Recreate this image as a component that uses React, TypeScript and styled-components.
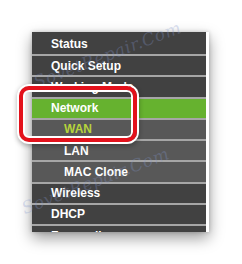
import React from "react";
import styled, { createGlobalStyle } from "styled-components";

const GlobalStyle = createGlobalStyle`
  html, body { margin: 0; padding: 0; background: #ffffff; }
  body { font-family: "Liberation Sans", Arial, sans-serif; }
`;

const Page = styled.div`
  position: relative;
  width: 242px;
  height: 264px;
  padding: 32px 0 0 32px;
  box-sizing: border-box;
  overflow: hidden;
`;

const Frame = styled.div`
  width: 177px;
  height: 200px;
  display: flex;
  background: #ffffff;
  overflow: hidden;
  box-shadow: 0 6px 14px rgba(0, 0, 0, 0.4), 0 0 4px rgba(0, 0, 0, 0.2);
`;

const Menu = styled.nav`
  width: 174px;
  display: flex;
  flex-direction: column;
  gap: 2px;
  background: #a6a6a6;
  flex-shrink: 0;
`;

type Kind = "main" | "sub" | "active" | "subActive";

const bg: Record<Kind, string> = {
  main: "#414141",
  sub: "#585858",
  active: "#66b22f",
  subActive: "#585858",
};

const fg: Record<Kind, string> = {
  main: "#ffffff",
  sub: "#ffffff",
  active: "#ffffff",
  subActive: "#b6d33c",
};

const Item = styled.div<{ $kind: Kind; $first?: boolean }>`
  flex-shrink: 0;
  height: ${(p) => (p.$first ? "22px" : "19.25px")};
  padding-top: ${(p) => (p.$first ? "1px" : "0")};
  box-sizing: border-box;
  display: flex;
  align-items: center;
  padding-left: ${(p) => (p.$kind === "sub" || p.$kind === "subActive" ? "32px" : "19px")};
  background: ${(p) => bg[p.$kind]};
  color: ${(p) => fg[p.$kind]};
  font-family: "Liberation Sans", Arial, sans-serif;
  font-weight: bold;
  font-size: 12px;
  white-space: nowrap;
`;

const Ring = styled.div`
  position: absolute;
  left: 19px;
  top: 86px;
  width: 118px;
  height: 56px;
  box-sizing: border-box;
  border: 4px solid #e3121c;
  border-radius: 10px;
  box-shadow: 0 0 0 2px #ffffff, 0 2px 5px 2px rgba(0, 0, 0, 0.3),
    inset 0 0 0 2px #ffffff;
  pointer-events: none;
`;

const Watermark = styled.div<{ $x: number; $y: number }>`
  position: absolute;
  left: ${(p) => p.$x}px;
  top: ${(p) => p.$y}px;
  transform: rotate(-21deg);
  transform-origin: left bottom;
  font-family: "DejaVu Serif", serif;
  font-style: italic;
  font-size: 17px;
  color: rgba(130, 150, 205, 0.3);
  white-space: nowrap;
  pointer-events: none;
  letter-spacing: 0.5px;
`;

const items: { label: string; kind: Kind }[] = [
  { label: "Status", kind: "main" },
  { label: "Quick Setup", kind: "main" },
  { label: "Working Mode", kind: "main" },
  { label: "Network", kind: "active" },
  { label: "WAN", kind: "subActive" },
  { label: "LAN", kind: "sub" },
  { label: "MAC Clone", kind: "sub" },
  { label: "Wireless", kind: "main" },
  { label: "DHCP", kind: "main" },
  { label: "Forwarding", kind: "main" },
];

export default function App() {
  return (
    <>
      <GlobalStyle />
      <Page>
        <Frame>
          <Menu>
            {items.map((it, i) => (
              <Item key={it.label} $kind={it.kind} $first={i === 0}>
                {it.label}
              </Item>
            ))}
          </Menu>
        </Frame>
        <Watermark $x={38} $y={72}>SovetRepair.Com</Watermark>
        <Watermark $x={26} $y={198}>SovetRepair.Com</Watermark>
        <Ring />
      </Page>
    </>
  );
}
